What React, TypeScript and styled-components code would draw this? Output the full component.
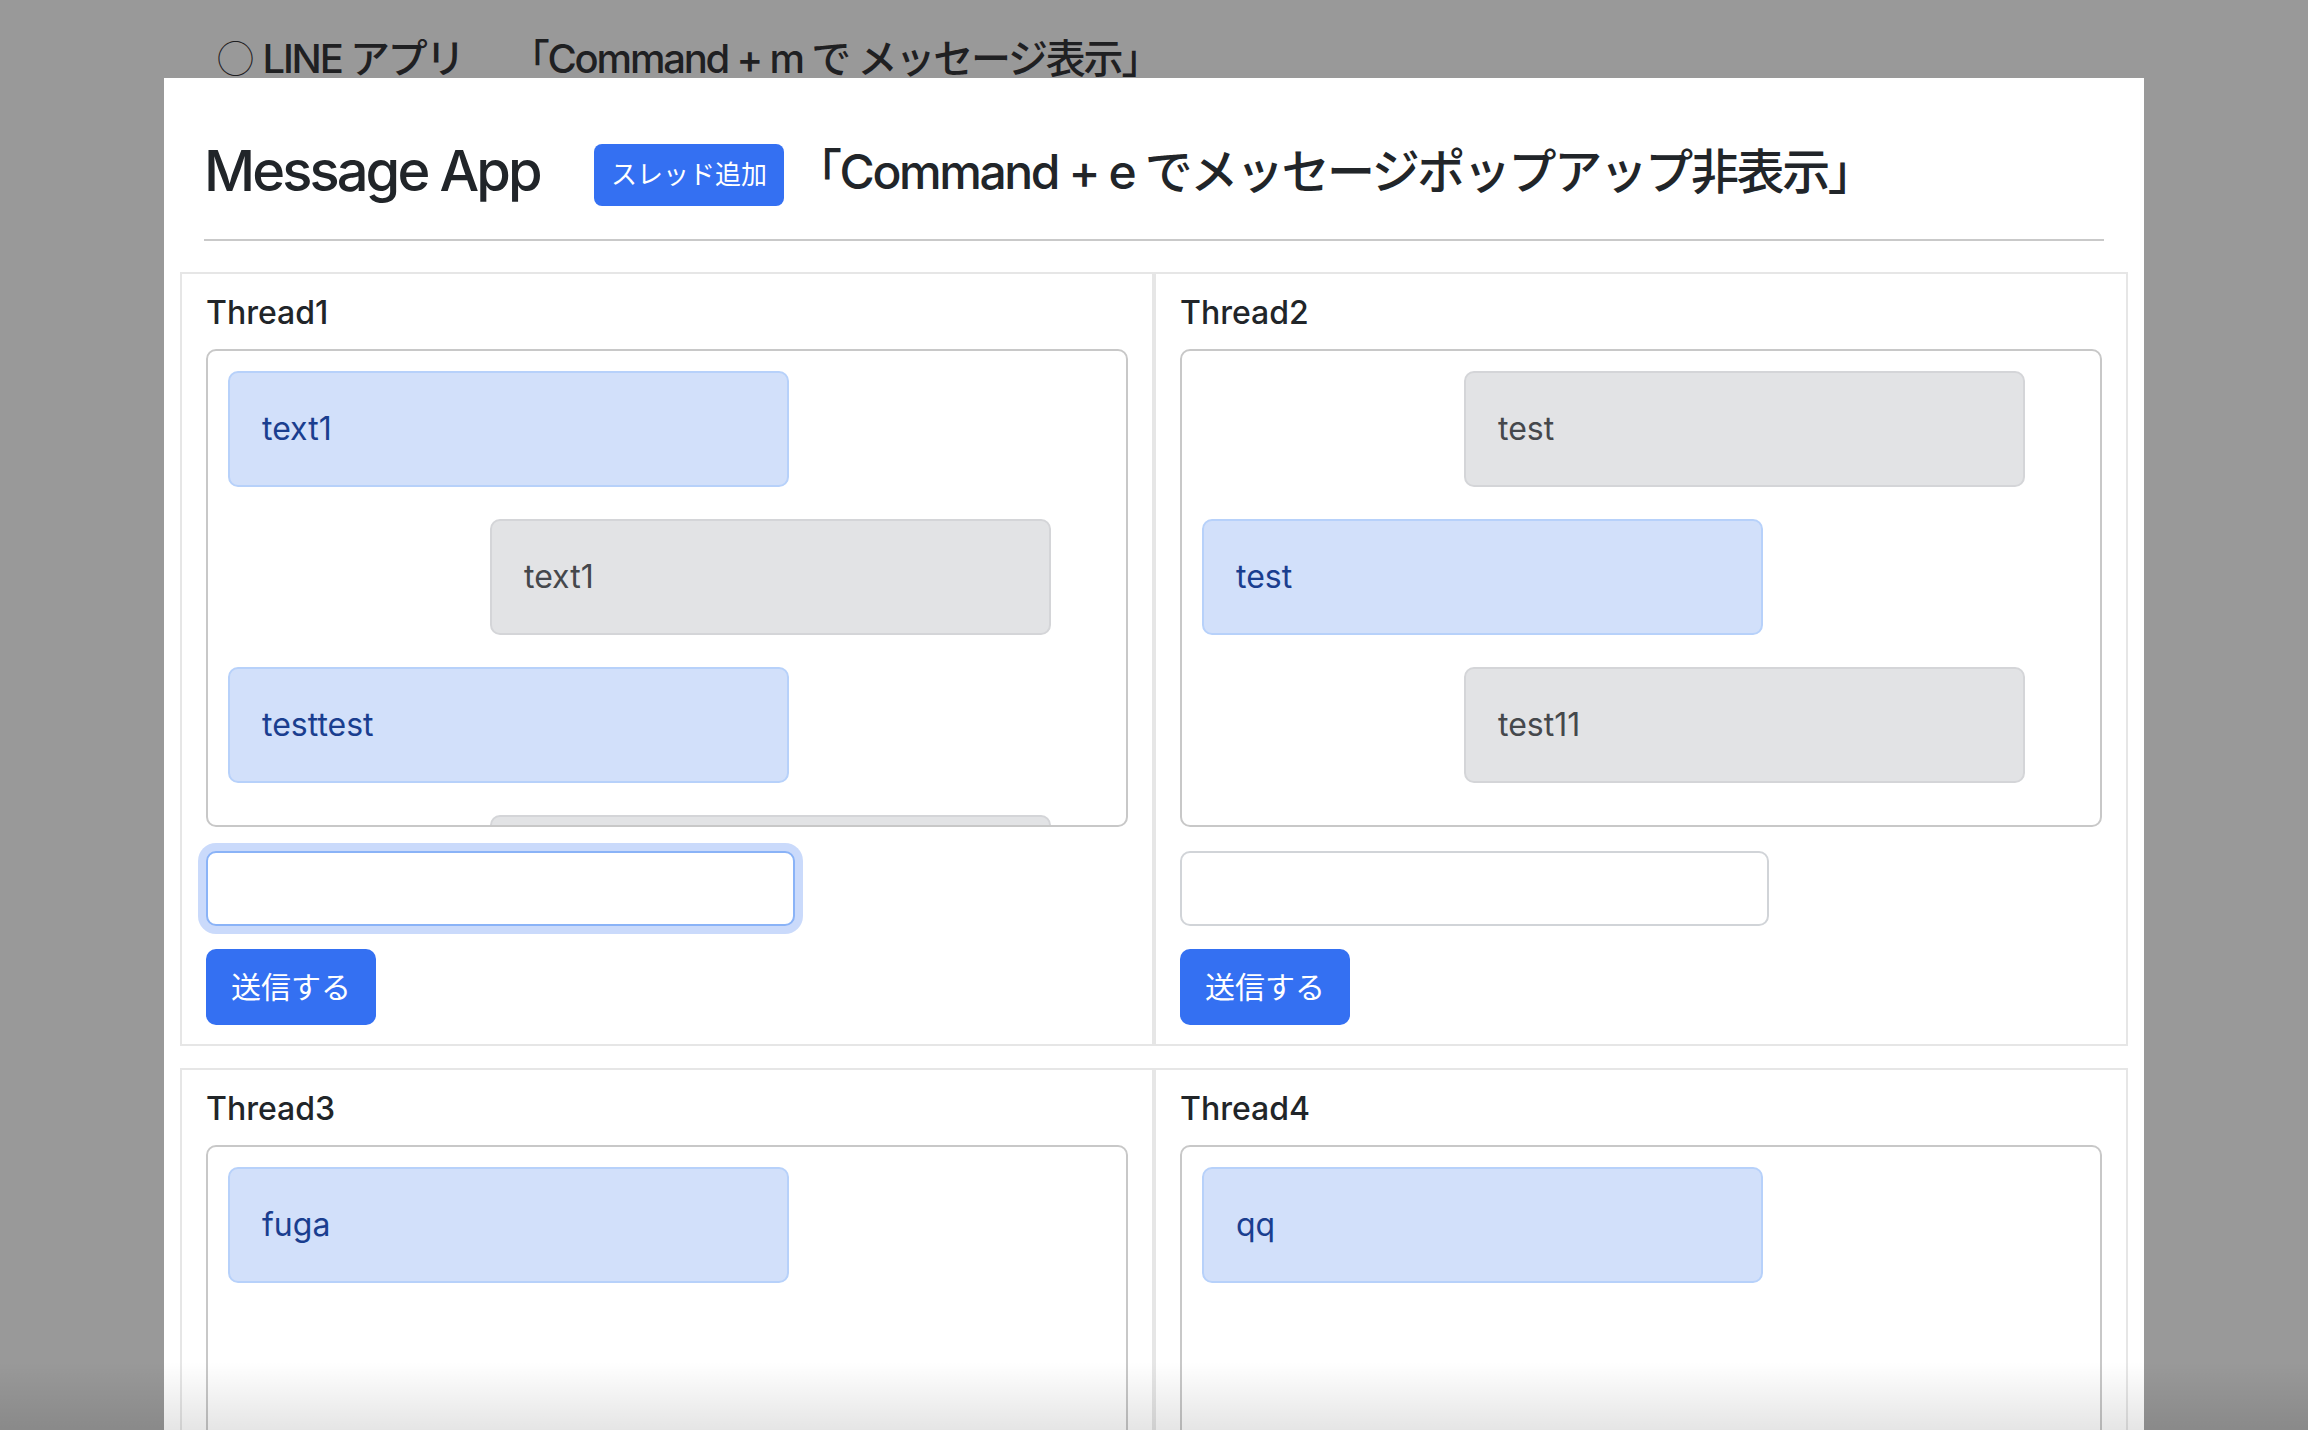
import React from "react";
import styled, { createGlobalStyle } from "styled-components";

const GlobalStyle = createGlobalStyle`
  html, body {
    margin: 0;
    padding: 0;
    height: 1430px;
    overflow: hidden;
    background: #999999;
  }
  body {
    font-family: Inter, "Noto Sans CJK JP", sans-serif;
    color: #212529;
    -webkit-font-smoothing: antialiased;
  }
  *, *::before, *::after { box-sizing: border-box; }
`;

const Page = styled.div`
  position: relative;
  height: 1430px;
  overflow: hidden;
  background: #999999;
`;

const TopNote = styled.div`
  height: 78px;
  padding: 33px 0 0 217px;
  font-size: 40px;
  line-height: 48px;
  font-weight: 500;
  letter-spacing: -2.2px;
  color: #1f2022;
  white-space: pre;
`;

const CircleMark = styled.span`
  font-family: "Noto Sans CJK JP", sans-serif;
  font-size: 37px;
  font-weight: 300;
  letter-spacing: 0;
`;

const Panel = styled.main`
  position: relative;
  width: 1980px;
  min-height: 1352px;
  margin: 0 auto;
  padding: 60px 40px 0;
  background: #ffffff;
`;

const Header = styled.header`
  display: flex;
  align-items: flex-start;
`;

const AppTitle = styled.h1`
  flex: 0 0 390px;
  margin: 0;
  font-size: 56px;
  line-height: 67px;
  font-weight: 500;
  letter-spacing: -2.9px;
  color: #212529;
  white-space: nowrap;
`;

const AddButton = styled.button`
  flex: 0 0 190px;
  height: 62px;
  margin: 6px 10px 0 0;
  padding: 0;
  border: none;
  border-radius: 8px;
  background: #3470f2;
  color: #ffffff;
  font-family: inherit;
  font-size: 26px;
  line-height: 1;
`;

const Shortcut = styled.h2`
  margin: 5px 0 0;
  font-size: 48px;
  line-height: 58px;
  font-weight: 500;
  letter-spacing: -2.4px;
  color: #212529;
  white-space: nowrap;
`;

const Divider = styled.hr`
  margin: 33px 0 31px;
  border: 0;
  border-top: 2px solid #c9c9c9;
`;

const ThreadGrid = styled.section`
  display: grid;
  grid-template-columns: 1fr 1fr;
  row-gap: 22px;
  margin: 0 -24px;
`;

const ThreadCard = styled.div`
  border: 2px solid #e6e6e6;
  padding: 20px 24px 19px;
`;

const ThreadTitle = styled.h3`
  margin: 0 0 17px;
  font-size: 32px;
  line-height: 38px;
  font-weight: 500;
  color: #212529;
`;

const MessageBox = styled.div`
  display: flex;
  flex-direction: column;
  align-items: flex-start;
  height: 478px;
  padding: 20px;
  border: 2px solid #c8c8c8;
  border-radius: 10px;
  overflow: hidden;
`;

const Bubble = styled.div<{ $mine: boolean }>`
  flex: 0 0 auto;
  width: 561px;
  margin: 0 0 32px ${(p) => (p.$mine ? 0 : 262)}px;
  padding: 32px;
  border: 2px solid ${(p) => (p.$mine ? "#b7d1fa" : "#d4d5d8")};
  border-radius: 10px;
  background: ${(p) => (p.$mine ? "#d2e0fa" : "#e2e3e5")};
  color: ${(p) => (p.$mine ? "#1a3e8f" : "#45484c")};
  font-size: 32px;
  line-height: 48px;
`;

const MessageInput = styled.input<{ $focused?: boolean }>`
  display: block;
  width: 589px;
  height: 75px;
  margin-top: 24px;
  padding: 0 24px;
  border: 2px solid ${(p) => (p.$focused ? "#8ab3f7" : "#d1d4d8")};
  border-radius: 10px;
  box-shadow: ${(p) => (p.$focused ? "0 0 0 8px #cadafb" : "none")};
  background: #ffffff;
  font-family: inherit;
  font-size: 32px;
  outline: none;
`;

const SendButton = styled.button`
  display: block;
  width: 170px;
  height: 76px;
  margin-top: 23px;
  padding: 0;
  border: none;
  border-radius: 10px;
  background: #3470f2;
  color: #ffffff;
  font-family: inherit;
  font-size: 30px;
  line-height: 1;
`;

const BottomShade = styled.div`
  position: absolute;
  left: 0;
  right: 0;
  bottom: 0;
  height: 68px;
  background: linear-gradient(to bottom, rgba(0, 0, 0, 0), rgba(0, 0, 0, 0.1));
  pointer-events: none;
`;

type Message = { text: string; mine: boolean };
type Thread = { name: string; messages: Message[]; focused?: boolean };

const threads: Thread[] = [
  {
    name: "Thread1",
    focused: true,
    messages: [
      { text: "text1", mine: true },
      { text: "text1", mine: false },
      { text: "testtest", mine: true },
      { text: "testtest", mine: false },
    ],
  },
  {
    name: "Thread2",
    messages: [
      { text: "test", mine: false },
      { text: "test", mine: true },
      { text: "test11", mine: false },
    ],
  },
  { name: "Thread3", messages: [{ text: "fuga", mine: true }] },
  { name: "Thread4", messages: [{ text: "qq", mine: true }] },
];

export default function App() {
  return (
    <Page>
      <GlobalStyle />
      <TopNote>
        <CircleMark>◯</CircleMark>
        {" LINE アプリ　 「Command + m で メッセージ表示」"}
      </TopNote>
      <Panel>
        <Header>
          <AppTitle>Message App</AppTitle>
          <AddButton type="button">スレッド追加</AddButton>
          <Shortcut>「Command + e でメッセージポップアップ非表示」</Shortcut>
        </Header>
        <Divider />
        <ThreadGrid>
          {threads.map((t) => (
            <ThreadCard key={t.name}>
              <ThreadTitle>{t.name}</ThreadTitle>
              <MessageBox>
                {t.messages.map((m, i) => (
                  <Bubble key={i} $mine={m.mine}>
                    {m.text}
                  </Bubble>
                ))}
              </MessageBox>
              <MessageInput type="text" $focused={t.focused} readOnly />
              <SendButton type="button">送信する</SendButton>
            </ThreadCard>
          ))}
        </ThreadGrid>
      </Panel>
      <BottomShade />
    </Page>
  );
}
